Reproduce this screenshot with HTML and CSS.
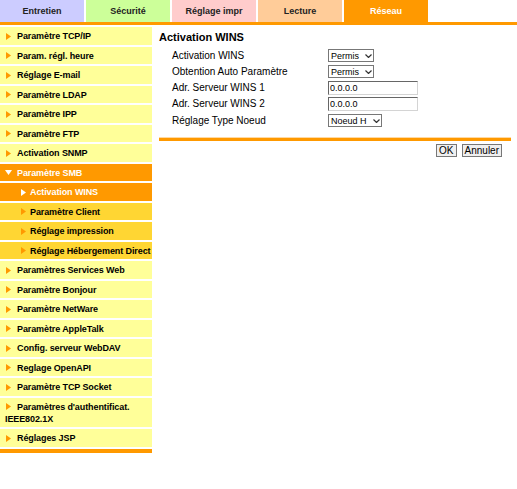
FILE: index.html
```html
<!DOCTYPE html>
<html lang="fr">
<head>
<meta charset="utf-8">
<title>Activation WINS</title>
<link rel="stylesheet" href="styles.css">
</head>
<body>
<div class="tabs">
  <div class="tab tab-entretien">Entretien</div>
  <div class="tab tab-securite">Sécurité</div>
  <div class="tab tab-reglage">Réglage impr</div>
  <div class="tab tab-lecture">Lecture</div>
  <div class="tab tab-reseau">Réseau</div>
</div>
<div class="main">
  <nav class="sidebar">
    <div class="nav-item"><svg class="arr" viewBox="0 0 5 7"><polygon points="0,0 5,3.5 0,7"/></svg>Paramètre TCP/IP</div>
    <div class="nav-item"><svg class="arr" viewBox="0 0 5 7"><polygon points="0,0 5,3.5 0,7"/></svg>Param. régl. heure</div>
    <div class="nav-item"><svg class="arr" viewBox="0 0 5 7"><polygon points="0,0 5,3.5 0,7"/></svg>Réglage E-mail</div>
    <div class="nav-item"><svg class="arr" viewBox="0 0 5 7"><polygon points="0,0 5,3.5 0,7"/></svg>Paramètre LDAP</div>
    <div class="nav-item"><svg class="arr" viewBox="0 0 5 7"><polygon points="0,0 5,3.5 0,7"/></svg>Paramètre IPP</div>
    <div class="nav-item"><svg class="arr" viewBox="0 0 5 7"><polygon points="0,0 5,3.5 0,7"/></svg>Paramètre FTP</div>
    <div class="nav-item"><svg class="arr" viewBox="0 0 5 7"><polygon points="0,0 5,3.5 0,7"/></svg>Activation SNMP</div>
    <div class="nav-item nav-open"><svg class="arr arr-down" viewBox="0 0 7 5"><polygon points="0,0 7,0 3.5,5"/></svg>Paramètre SMB</div>
    <div class="nav-item nav-sub nav-active"><svg class="arr" viewBox="0 0 5 7"><polygon points="0,0 5,3.5 0,7"/></svg>Activation WINS</div>
    <div class="nav-item nav-sub"><svg class="arr" viewBox="0 0 5 7"><polygon points="0,0 5,3.5 0,7"/></svg>Paramètre Client</div>
    <div class="nav-item nav-sub"><svg class="arr" viewBox="0 0 5 7"><polygon points="0,0 5,3.5 0,7"/></svg>Réglage impression</div>
    <div class="nav-item nav-sub"><svg class="arr" viewBox="0 0 5 7"><polygon points="0,0 5,3.5 0,7"/></svg>Réglage Hébergement Direct</div>
    <div class="nav-item"><svg class="arr" viewBox="0 0 5 7"><polygon points="0,0 5,3.5 0,7"/></svg>Paramètres Services Web</div>
    <div class="nav-item"><svg class="arr" viewBox="0 0 5 7"><polygon points="0,0 5,3.5 0,7"/></svg>Paramètre Bonjour</div>
    <div class="nav-item"><svg class="arr" viewBox="0 0 5 7"><polygon points="0,0 5,3.5 0,7"/></svg>Paramètre NetWare</div>
    <div class="nav-item"><svg class="arr" viewBox="0 0 5 7"><polygon points="0,0 5,3.5 0,7"/></svg>Paramètre AppleTalk</div>
    <div class="nav-item"><svg class="arr" viewBox="0 0 5 7"><polygon points="0,0 5,3.5 0,7"/></svg>Config. serveur WebDAV</div>
    <div class="nav-item"><svg class="arr" viewBox="0 0 5 7"><polygon points="0,0 5,3.5 0,7"/></svg>Reglage OpenAPI</div>
    <div class="nav-item"><svg class="arr" viewBox="0 0 5 7"><polygon points="0,0 5,3.5 0,7"/></svg>Paramètre TCP Socket</div>
    <div class="nav-item"><svg class="arr" viewBox="0 0 5 7"><polygon points="0,0 5,3.5 0,7"/></svg>Paramètres d'authentificat. IEEE802.1X</div>
    <div class="nav-item"><svg class="arr" viewBox="0 0 5 7"><polygon points="0,0 5,3.5 0,7"/></svg>Réglages JSP</div>
    <div class="sidebar-end"></div>
  </nav>
  <main class="content">
    <h1 class="title">Activation WINS</h1>
    <div class="form">
      <label class="lbl">Activation WINS</label>
      <span class="sel sel-permis"><select><option>Permis</option></select><svg class="chev" viewBox="0 0 7 4"><polyline points="0.5,0.5 3.5,3.5 6.5,0.5"/></svg></span>
      <label class="lbl">Obtention Auto Paramètre</label>
      <span class="sel sel-permis"><select><option>Permis</option></select><svg class="chev" viewBox="0 0 7 4"><polyline points="0.5,0.5 3.5,3.5 6.5,0.5"/></svg></span>
      <label class="lbl">Adr. Serveur WINS 1</label>
      <input class="txt" type="text" value="0.0.0.0">
      <label class="lbl">Adr. Serveur WINS 2</label>
      <input class="txt" type="text" value="0.0.0.0">
      <label class="lbl">Réglage Type Noeud</label>
      <span class="sel sel-noeud"><select><option>Noeud H</option></select><svg class="chev" viewBox="0 0 7 4"><polyline points="0.5,0.5 3.5,3.5 6.5,0.5"/></svg></span>
    </div>
    <div class="rule"></div>
    <div class="buttons">
      <button class="btn" type="button">OK</button>
      <button class="btn" type="button">Annuler</button>
    </div>
  </main>
</div>
</body>
</html>
```
FILE: styles.css
```css
body {
  margin: 0;
  width: 517px;
  font-family: "Liberation Sans", Arial, sans-serif;
  color: #000;
  background: #fff;
}

.tabs {
  display: flex;
  gap: 2px;
  height: 22px;
  border-bottom: 3px solid #ff9900;
}
.tab {
  width: 84px;
  display: flex;
  align-items: center;
  justify-content: center;
  font-size: 9px;
  font-weight: bold;
  color: #222;
}
.tab-entretien { background: #ccccff; }
.tab-securite { background: #ccff99; }
.tab-reglage { background: #ffcccc; }
.tab-lecture { background: #ffcc99; }
.tab-reseau { background: #ff9900; color: #fff; }

.main {
  display: flex;
  align-items: flex-start;
  margin-top: 2px;
}

.sidebar {
  width: 152px;
  flex: none;
}
.nav-item {
  background: #ffff99;
  margin-bottom: 2px;
  padding: 3px 0 2.5px 5px;
  line-height: 12px;
  font-size: 9px;
  font-weight: bold;
  letter-spacing: -0.1px;
  white-space: normal;
}
.arr {
  display: inline-block;
  width: 5px;
  height: 7px;
  margin: 0 6px 0 1px;
  vertical-align: -0.5px;
  fill: #ff9900;
}
.arr-down {
  width: 7px;
  height: 5px;
  margin: 0 5px 0 0;
  vertical-align: 1px;
  fill: #fff;
}
.nav-open {
  background: #ff9900;
  color: #fff;
}
.nav-sub {
  background: #ffd633;
  padding-left: 20px;
}
.nav-sub .arr {
  margin-right: 4px;
}
.nav-active {
  background: #ff9900;
  color: #fff;
}
.nav-active .arr { fill: #fff; }
.sidebar-end {
  height: 4px;
  background: #ff9900;
}

.content {
  flex: 1;
  margin-left: 7px;
  margin-right: 6px;
}
.title {
  font-size: 11px;
  font-weight: bold;
  line-height: 13px;
  margin: 4px 0 3.5px 0;
}
.form {
  display: grid;
  grid-template-columns: 156px auto;
  grid-auto-rows: 16.25px;
  align-items: center;
  justify-items: start;
  padding-left: 13px;
}
.lbl {
  font-size: 10px;
  line-height: 12px;
}
.sel {
  position: relative;
  display: block;
  height: 13px;
}
.sel select {
  display: block;
  appearance: none;
  -webkit-appearance: none;
  margin: 0;
  height: 13px;
  padding: 0 0 0 2px;
  border: 1px solid #777;
  border-radius: 0;
  background: #fff;
  font-family: "Liberation Sans", Arial, sans-serif;
  font-size: 9px;
  color: #000;
  box-sizing: border-box;
}
.sel-permis select { width: 46px; }
.sel-noeud select { width: 54px; }
.chev {
  position: absolute;
  right: 2px;
  top: 4.5px;
  width: 7px;
  height: 4px;
  fill: none;
  stroke: #333;
  stroke-width: 1.2;
}
.txt {
  display: block;
  margin: 0;
  width: 90px;
  height: 14px;
  box-sizing: border-box;
  padding: 0 1px;
  border: 1px solid #d4d4d4;
  border-top-color: #666;
  border-left-color: #666;
  font-family: "Liberation Sans", Arial, sans-serif;
  font-size: 9px;
  color: #000;
}
.rule {
  margin-top: 8.5px;
  height: 3px;
  background: #ff9900;
  border-top: 1px solid #ffd9a3;
}
.buttons {
  display: flex;
  justify-content: flex-end;
  gap: 5px;
  padding-right: 9px;
  margin-top: 3px;
}
.btn {
  height: 13px;
  padding: 0 2px;
  border: 1px solid #777;
  border-radius: 0;
  background: #efefef;
  font-family: "Liberation Sans", Arial, sans-serif;
  font-size: 10px;
  line-height: 11px;
  color: #000;
}
```
